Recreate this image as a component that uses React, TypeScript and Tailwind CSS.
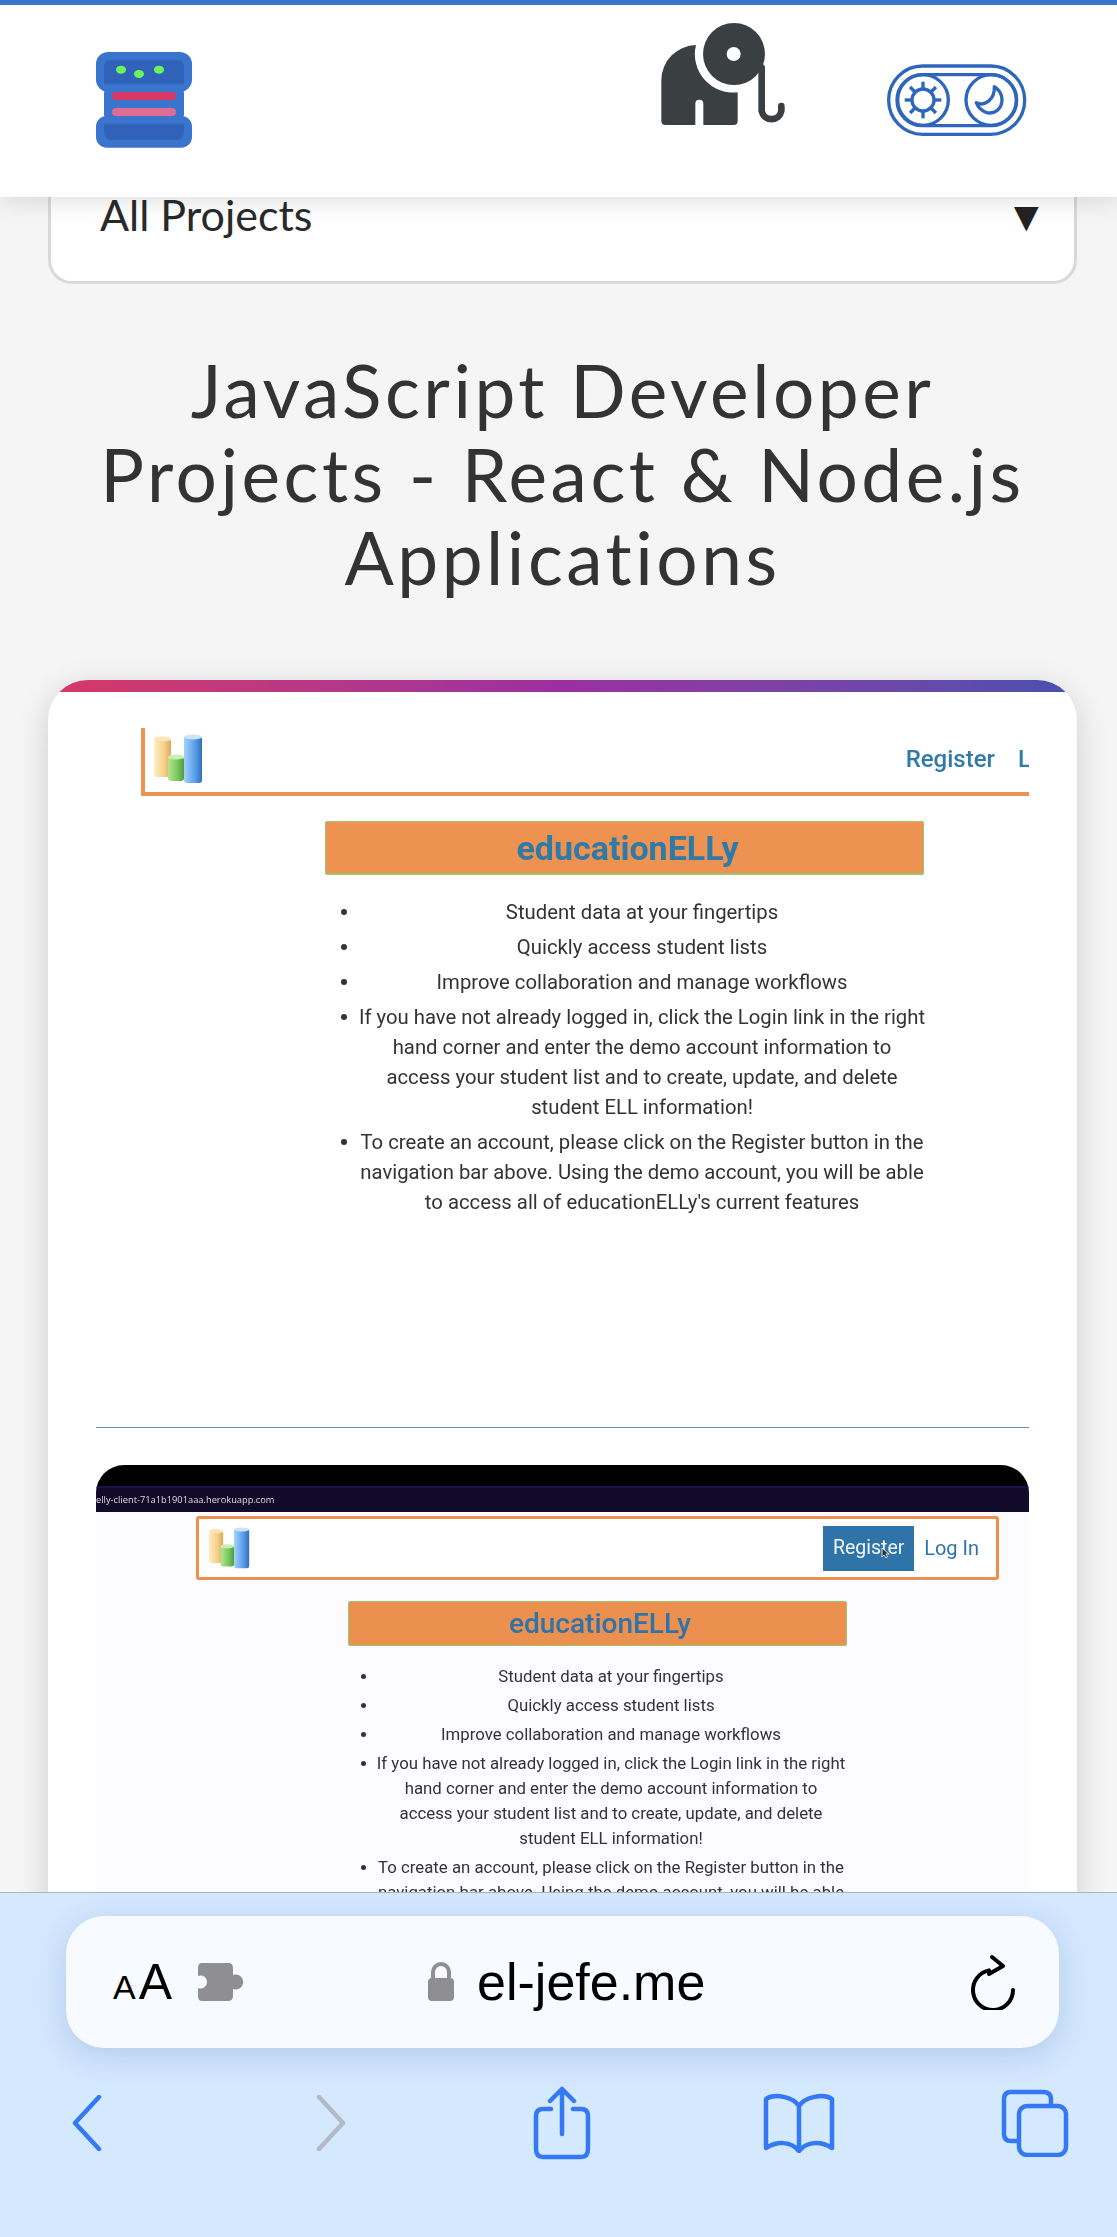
const features = [
  "Student data at your fingertips",
  "Quickly access student lists",
  "Improve collaboration and manage workflows",
  "If you have not already logged in, click the Login link in the right\nhand corner and enter the demo account information to\naccess your student list and to create, update, and delete\nstudent ELL information!",
  "To create an account, please click on the Register button in the\nnavigation bar above. Using the demo account, you will be able\nto access all of educationELLy's current features",
];

function ServerLogo() {
  return (
    <svg width="96" height="96" viewBox="108 99 288 288" className="block">
      <rect x="132" y="200" width="240" height="110" rx="24" fill="#3a74cc" />
      <rect x="108" y="99" width="288" height="119" rx="36" fill="#3a74cc" />
      <rect x="108" y="291" width="288" height="95" rx="32" fill="#3a74cc" />
      <path d="M154 123H350Q372 123 372 145V195H132V145Q132 123 154 123Z" fill="#2f62b8" />
      <path d="M132 315H372V340Q372 362 350 362H154Q132 362 132 340Z" fill="#2f62b8" />
      <ellipse cx="183" cy="152" rx="15" ry="12" fill="#6bf55a" />
      <ellipse cx="237" cy="165" rx="15" ry="12" fill="#6bf55a" />
      <ellipse cx="297" cy="152" rx="15" ry="12" fill="#6bf55a" />
      <rect x="156" y="219" width="192" height="24" rx="12" fill="#d63865" />
      <rect x="156" y="267" width="192" height="24" rx="12" fill="#e06c93" />
    </svg>
  );
}

function Elephant() {
  return (
    <svg width="126" height="104" viewBox="60 33 378 312" className="block">
      <path d="M168 102A106 106 0 0 0 64 208V330Q64 342 76 342H166V278A12 12 0 0 1 190 278V342H281Q293 342 293 330V244A115 115 0 0 1 168 102Z" fill="#3a3f42" />
      <circle cx="282" cy="129" r="93" fill="#3a3f42" />
      <path d="M365 170V300A30 30 0 0 0 424 300V285" fill="none" stroke="#3a3f42" strokeWidth="20" strokeLinecap="round" />
      <circle cx="281" cy="129" r="21" fill="#fff" />
    </svg>
  );
}

function ThemeToggle() {
  const spokes = [0, 45, 90, 135, 180, 225, 270, 315];
  return (
    <svg width="140" height="72" viewBox="742 164 420 216" fill="none" stroke="#2f66bd" strokeWidth="10" className="block">
      <rect x="747" y="170" width="408" height="205" rx="102" />
      <rect x="772" y="196" width="358" height="153" rx="76" />
      <circle cx="850" cy="272" r="76" />
      <circle cx="1055" cy="272" r="76" />
      <circle cx="850" cy="272" r="33" />
      {spokes.map((deg) => (
        <line key={deg} x1="850" y1="239" x2="850" y2="217" transform={`rotate(${deg} 850 272)`} />
      ))}
      <path d="M1064 232C1092 250 1094 286 1072 304C1050 320 1020 306 1010 280C1034 292 1066 272 1064 232Z" strokeLinejoin="round" />
    </svg>
  );
}

function ChartLogo({ size }: { size: number }) {
  return (
    <svg width={size} height={size} viewBox="0 0 50 50" className="block">
      <defs>
        <linearGradient id="barTan" x1="0" x2="1" y1="0" y2="0">
          <stop offset="0" stopColor="#fdeec8" />
          <stop offset="0.6" stopColor="#f7cf86" />
          <stop offset="1" stopColor="#dca85c" />
        </linearGradient>
        <linearGradient id="barGreen" x1="0" x2="1" y1="0" y2="0">
          <stop offset="0" stopColor="#b6e596" />
          <stop offset="0.6" stopColor="#78c75c" />
          <stop offset="1" stopColor="#4f9c43" />
        </linearGradient>
        <linearGradient id="barBlue" x1="0" x2="1" y1="0" y2="0">
          <stop offset="0" stopColor="#a5d2f8" />
          <stop offset="0.6" stopColor="#5a9fe8" />
          <stop offset="1" stopColor="#2f6fbc" />
        </linearGradient>
      </defs>
      <rect x="1" y="5" width="17" height="38" rx="3" fill="url(#barTan)" />
      <ellipse cx="9.500" cy="5" rx="8.500" ry="2.500" fill="#fbe3b4" />
      <rect x="15" y="23" width="16" height="24" rx="3" fill="url(#barGreen)" />
      <ellipse cx="23" cy="23" rx="8" ry="2.500" fill="#cdeeb0" />
      <rect x="31" y="2" width="18" height="47" rx="3" fill="url(#barBlue)" />
      <ellipse cx="40" cy="3" rx="9" ry="2.500" fill="#c9e4fb" />
    </svg>
  );
}

function FeatureList({ className, dotClass }: { className: string; dotClass: string }) {
  return (
    <ul className={className}>
      {features.map((f) => (
        <li key={f} className="relative whitespace-pre-line">
          <span className={dotClass} />
          {f}
        </li>
      ))}
    </ul>
  );
}

function BrowserBar() {
  return (
    <div className="absolute bottom-0 left-0 right-0 z-20 h-[345px] border-t border-[#a8b4c4] bg-[#d4e8fe]">
      <div className="ml-[66px] mr-[58px] mt-[23px] flex h-[132px] items-center rounded-[38px] bg-[#f7fbff] shadow-[0_8px_32px_rgba(60,100,170,0.22)]">
        <div className="ml-[47px] flex items-baseline font-['Liberation_Sans',sans-serif] leading-none text-black">
          <span className="text-[34px]">A</span>
          <span className="ml-[3px] text-[50px]">A</span>
        </div>
        <svg width="48" height="40" viewBox="0 0 48 40" className="ml-[25px] block">
          <path d="M5 1H31Q36 1 36 6V13A7.500 7.500 0 1 1 36 27V34Q36 39 31 39H5Q1 39 1 34V26A6.500 6.500 0 1 0 1 14V6Q1 1 5 1Z" fill="#8e8e93" />
        </svg>
        <svg width="28" height="40" viewBox="0 0 28 40" className="ml-[182px] block">
          <path d="M6 18V10A8 8 0 0 1 22 10V18" fill="none" stroke="#8e8e93" strokeWidth="4" />
          <rect x="1" y="16" width="26" height="23" rx="4" fill="#8e8e93" />
        </svg>
        <span className="ml-[22px] font-['Liberation_Sans',sans-serif] text-[52px] leading-none text-black">el-jefe.me</span>
        <svg width="46" height="56" viewBox="0 0 46 56" fill="none" stroke="#000" strokeWidth="4" strokeLinecap="round" strokeLinejoin="round" className="ml-auto mr-[43px] block">
          <path d="M19 16.400A20 20 0 1 0 43 36" />
          <path d="M22 3L33 12L19 20" />
        </svg>
      </div>
      <div className="mt-[32px] flex h-[86px] items-center">
        <svg width="30" height="56" viewBox="0 0 30 56" fill="none" stroke="#3478f6" strokeWidth="4.500" strokeLinecap="round" strokeLinejoin="round" className="ml-[72px] block">
          <path d="M27 2L3 28L27 54" />
        </svg>
        <svg width="30" height="56" viewBox="0 0 30 56" fill="none" stroke="#b2bac6" strokeWidth="4.500" strokeLinecap="round" strokeLinejoin="round" className="ml-[214px] block">
          <path d="M3 2L27 28L3 54" />
        </svg>
        <svg width="58" height="74" viewBox="0 0 58 74" fill="none" stroke="#3478f6" strokeWidth="4.500" strokeLinecap="round" strokeLinejoin="round" className="ml-[187px] block">
          <path d="M18 23H10Q3 23 3 30V63Q3 71 10 71H48Q55 71 55 63V30Q55 23 48 23H40" />
          <path d="M29 48V3M17 15L29 3L41 15" />
        </svg>
        <svg width="72" height="60" viewBox="0 0 72 60" fill="none" stroke="#3478f6" strokeWidth="4.500" strokeLinecap="round" strokeLinejoin="round" className="ml-[172px] block">
          <path d="M36 13C30 4 12 0 3 6V55C14 48 28 48 36 58C44 48 58 48 69 55V6C60 0 42 4 36 13ZM36 13V56" />
        </svg>
        <svg width="68" height="68" viewBox="0 0 68 68" fill="none" stroke="#3478f6" strokeWidth="4.500" strokeLinejoin="round" className="ml-[166px] block">
          <path d="M16 52H10Q3 52 3 45V10Q3 3 10 3H42Q50 3 50 10V17" />
          <rect x="18" y="17" width="47" height="49" rx="8" />
        </svg>
      </div>
    </div>
  );
}

export default function App() {
  return (
    <div className="relative h-[2237px] w-[1117px] overflow-hidden bg-[#f5f5f5] font-['Roboto',sans-serif]">
      <header className="relative z-10 flex h-[197px] items-center border-t-[5px] border-[#3a75cc] bg-white shadow-[0_4px_24px_rgba(0,0,0,0.12)]">
        <div className="ml-[96px] mt-[-2px]"><ServerLogo /></div>
        <div className="ml-[468px] mt-[-54px]"><Elephant /></div>
        <div className="ml-[101px] mt-[-2px]"><ThemeToggle /></div>
      </header>

      <div className="ml-[48px] mr-[40px] flex h-[87px] items-start justify-between rounded-b-[24px] border-x-[3px] border-b-[3px] border-[#d9d9d9] bg-white pl-[49px] pr-[27px] font-['Lato',sans-serif]">
        <span className="text-[43px] leading-[36px] text-[#2a2a2a]">All Projects</span>
        <span className="text-[42px] leading-[36px] text-[#222]">▼</span>
      </div>

      <h1 className="ml-[48px] mr-[40px] mt-[65px] px-[30px] text-center font-['Lato',sans-serif] text-[73px] font-normal leading-[83.5px] tracking-[0.048em] text-[#333]">
        JavaScript Developer Projects - React &amp; Node.js Applications
      </h1>

      <article className="ml-[48px] mr-[40px] mt-[80.500px] h-[1300px] overflow-hidden rounded-t-[40px] bg-white shadow-[0_8px_32px_rgba(0,0,0,0.16)]">
        <div className="h-[12px] bg-gradient-to-r from-[#d63864] via-[#9b2fa0] to-[#4a4fae]" />
        <div className="px-[48px] pt-[36px]">
          <section className="h-[699px] overflow-hidden blur-[0.3px]">
            <div className="ml-[45px] flex h-[68px] items-center border-b-4 border-l-4 border-[#ee9252] pb-[3px] pl-[8px]">
              <ChartLogo size={50} />
              <span className="ml-auto text-[24px] font-medium text-[#2f7aa8]">Register</span>
              <span className="ml-[23px] w-[11px] overflow-hidden text-[24px] font-medium text-[#2f7aa8]">L</span>
            </div>
            <div className="ml-[229px] mt-[25px] flex h-[54px] w-[599px] items-center justify-center rounded-[2px] border border-b-2 border-[#9fc56f] bg-[#ee9252] pl-[6px] pt-[1px] text-[34px] font-bold text-[#2f7aa6]">
              educationELLy
            </div>
            <FeatureList
              className="ml-[261px] mt-[22px] w-[570px] text-center text-[20.300px] leading-[30px] text-[#333] [&>li]:mb-[5px]"
              dotClass="absolute left-[-16px] top-[12px] size-[6px] rounded-full bg-[#333]"
            />
          </section>
          <div className="h-px bg-[#5b93b8]" />
          <section className="relative mt-[37px] h-[500px] overflow-hidden rounded-t-[28px] bg-[#fcfbff] blur-[0.3px]">
            <div className="h-[21px] bg-black" />
            <div className="h-[26px] overflow-hidden whitespace-nowrap border-t-[2px] border-[#20104a] bg-[#120a2a] font-['Open_Sans',sans-serif] text-[9.300px] leading-[23px] text-[#ddd]">
              elly-client-71a1b1901aaa.herokuapp.com
            </div>
            <div className="ml-[100px] mt-[4px] flex h-[64px] w-[803px] items-center rounded-[3px] border-[3.500px] border-[#ec9050] bg-white pl-[9px] pr-[17px]">
              <ChartLogo size={42} />
              <span className="ml-auto flex h-[45px] w-[91px] items-center justify-center bg-[#2f74a8] text-[19.500px] text-[#f2f6fa]">Register</span>
              <span className="ml-[10px] text-[20px] text-[#2f74a8]">Log In</span>
            </div>
            <svg width="8" height="12" viewBox="0 0 8 12" className="absolute left-[785px] top-[82px] block">
              <path d="M1 1V10L3 8L5 11L6.500 10L5 7H8Z" fill="#333" stroke="#fff" strokeWidth="0.800" />
            </svg>
            <div className="ml-[252px] mt-[21px] flex h-[45px] w-[499px] items-center justify-center rounded-[2px] border border-[#9fc56f] bg-[#ec9050] pl-[5px] text-[28px] font-medium text-[#2f74a8]">
              educationELLy
            </div>
            <FeatureList
              className="ml-[277px] mt-[18px] w-[476px] text-center text-[16.800px] leading-[25px] text-[#333] [&>li]:mb-[4px]"
              dotClass="absolute left-[-12px] top-[10px] size-[5px] rounded-full bg-[#333]"
            />
          </section>
        </div>
      </article>

      <BrowserBar />
    </div>
  );
}
